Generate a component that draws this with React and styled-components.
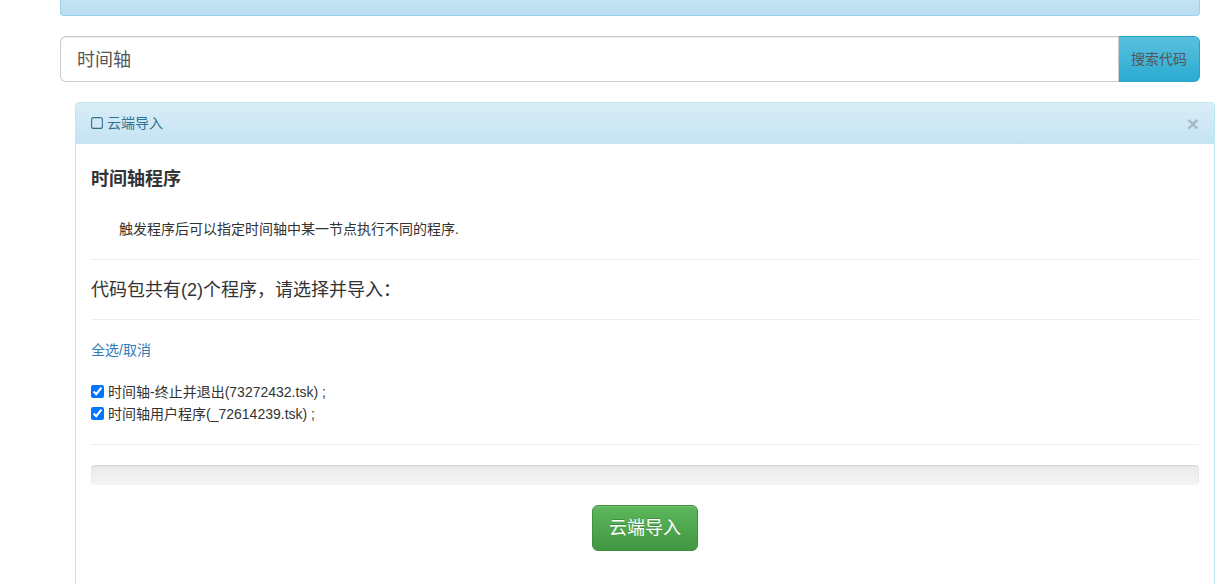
import React from 'react';
import styled, { createGlobalStyle } from 'styled-components';

const GlobalStyle = createGlobalStyle`
    * {
        box-sizing: border-box;
    }
    html, body {
        margin: 0;
        padding: 0;
        background: #fff;
    }
    body {
        font-family: 'Liberation Sans', 'Noto Sans CJK SC', Arial, sans-serif;
        font-size: 14px;
        line-height: 20px;
        color: #333;
    }
`;

const Page = styled.div`
    width: 1231px;
    height: 584px;
    overflow: hidden;
    padding-left: 60px;
    padding-right: 31px;
`;

const TopAlert = styled.div`
    height: 16px;
    background: linear-gradient(to bottom, #c4e3f3, #b9def0);
    border: 1px solid #9acfea;
    border-top: 0;
    border-radius: 0 0 4px 4px;
`;

const SearchRow = styled.div`
    display: flex;
    height: 46px;
    margin-top: 20px;
`;

const SearchInput = styled.input`
    flex: 1;
    min-width: 0;
    height: 46px;
    padding: 8px 16px 10px;
    font-family: inherit;
    font-size: 18px;
    line-height: 24px;
    color: #555;
    background: #fff;
    border: 1px solid #ccc;
    border-right: 0;
    border-radius: 6px 0 0 6px;
    box-shadow: inset 0 1px 1px rgba(0, 0, 0, 0.075);
    outline: none;
`;

const SearchButton = styled.button`
    width: 82px;
    height: 46px;
    padding: 0 0 2px;
    font-family: inherit;
    font-size: 14px;
    color: #555;
    background: linear-gradient(to bottom, #5bc0de, #2aabd2);
    border: 1px solid #28a4c9;
    border-left-color: #ccc;
    border-radius: 0 6px 6px 0;
`;

const Panel = styled.section`
    margin: 20px -15px 0 15px;
    height: 520px;
    background: #fff;
    border: 1px solid #bce8f1;
    border-radius: 4px;
`;

const PanelHeading = styled.header`
    display: flex;
    align-items: center;
    justify-content: space-between;
    height: 41px;
    padding: 0 15px;
    color: #31708f;
    font-size: 14px;
    background: linear-gradient(to bottom, #d9edf7, #c4e3f3);
    border-radius: 3px 3px 0 0;
`;

const PanelTitle = styled.span`
    display: flex;
    align-items: center;
    gap: 4px;
    padding-bottom: 2px;
`;

const CloseMark = styled.span`
    font-size: 21px;
    font-weight: 700;
    line-height: 1;
    color: #000;
    opacity: 0.2;
`;

const PanelBody = styled.div`
    padding: 15px;
`;

const ProgramTitle = styled.h4`
    margin: 10px 0;
    font-size: 18px;
    font-weight: 700;
    line-height: 20px;
    color: #333;
`;

const Description = styled.p`
    margin: 30px 0 20px;
    padding-left: 28px;
    height: 20px;
    color: #333;
`;

const Divider = styled.hr`
    margin: 0;
    border: 0;
    border-top: 1px solid #eee;
`;

const CountTitle = styled.h5`
    margin: 20px 0 19px;
    font-size: 18px;
    font-weight: 400;
    line-height: 20px;
    color: #333;
`;

const SelectAll = styled.a`
    display: block;
    margin-top: 20px;
    color: #337ab7;
    text-decoration: none;
`;

const FileList = styled.div`
    margin: 21px 0 19px;
`;

const FileRow = styled.label`
    display: flex;
    align-items: center;
    height: 22px;
    color: #333;
`;

const FileCheck = styled.input`
    width: 13px;
    height: 13px;
    margin: 0 4px 2px 0;
    flex: none;
`;

const ProgressTrack = styled.div`
    height: 20px;
    margin-top: 20px;
    background: linear-gradient(to bottom, #ebebeb, #f5f5f5);
    border-radius: 4px;
    box-shadow: inset 0 1px 2px rgba(0, 0, 0, 0.1);
`;

const ActionRow = styled.div`
    display: flex;
    justify-content: center;
    margin-top: 20px;
`;

const ImportButton = styled.button`
    width: 106px;
    height: 46px;
    padding: 0 0 5px;
    font-family: inherit;
    font-size: 18px;
    color: #fff;
    background: linear-gradient(to bottom, #5cb85c, #419641);
    border: 1px solid #3e8f3e;
    border-radius: 6px;
    text-shadow: 0 -1px 0 rgba(0, 0, 0, 0.2);
    box-shadow: inset 0 1px 0 rgba(255, 255, 255, 0.15);
`;

const SquareIcon = () => (
    <svg width="12" height="12" viewBox="0 0 12 12" fill="none">
        <rect x="0.6" y="0.6" width="10.8" height="10.8" rx="2" stroke="#31708f" strokeWidth="1.1" />
    </svg>
);

const files = ['时间轴-终止并退出(73272432.tsk) ;', '时间轴用户程序(_72614239.tsk) ;'];

export default function App() {
    return (
        <Page>
            <GlobalStyle />
            <TopAlert />
            <SearchRow>
                <SearchInput defaultValue="时间轴" />
                <SearchButton>搜索代码</SearchButton>
            </SearchRow>
            <Panel>
                <PanelHeading>
                    <PanelTitle>
                        <SquareIcon />
                        云端导入
                    </PanelTitle>
                    <CloseMark>×</CloseMark>
                </PanelHeading>
                <PanelBody>
                    <ProgramTitle>时间轴程序</ProgramTitle>
                    <Description>触发程序后可以指定时间轴中某一节点执行不同的程序.</Description>
                    <Divider />
                    <CountTitle>代码包共有(2)个程序，请选择并导入：</CountTitle>
                    <Divider />
                    <SelectAll href="#">全选/取消</SelectAll>
                    <FileList>
                        {files.map((name) => (
                            <FileRow key={name}>
                                <FileCheck type="checkbox" defaultChecked />
                                {name}
                            </FileRow>
                        ))}
                    </FileList>
                    <Divider />
                    <ProgressTrack />
                    <ActionRow>
                        <ImportButton>云端导入</ImportButton>
                    </ActionRow>
                </PanelBody>
            </Panel>
        </Page>
    );
}
